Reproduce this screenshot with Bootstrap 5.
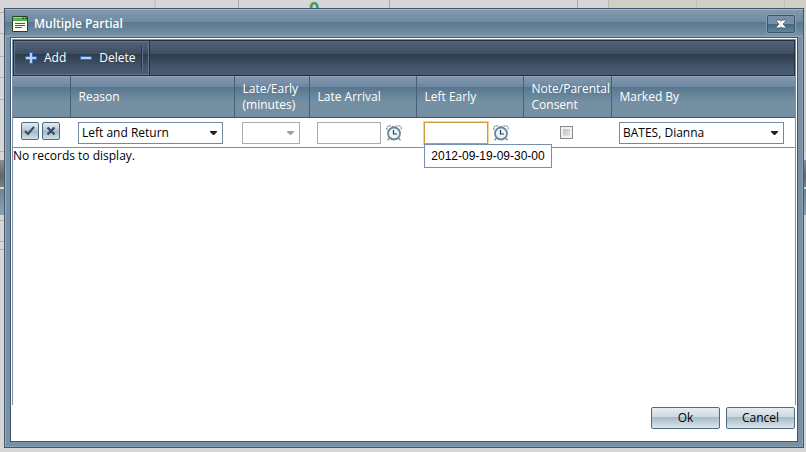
<!DOCTYPE html>
<html lang="en">
<head>
<meta charset="utf-8">
<meta name="viewport" content="width=device-width, initial-scale=1">
<title>Multiple Partial</title>
<link href="https://cdn.jsdelivr.net/npm/bootstrap@5.3.0/dist/css/bootstrap.min.css" rel="stylesheet">
<style>
body {
  font-family: "Open Sans", "Noto Sans", sans-serif;
  font-size: 12px;
  line-height: 16px;
  color: #000;
  background-color: #d6d6d6;
}
/* page behind the dialog */
.backdrop-page {
  background:
    linear-gradient(#8d9093, #63676b 15px, #7b7f83) 0 160px / 100% 27px no-repeat,
    linear-gradient(#6d8596, #8fa2b0) 0 189px / 100% 26px no-repeat,
    linear-gradient(#b0b0b0, #b0b0b0) 0 12px / 4px 1px no-repeat,
    linear-gradient(#b0b0b0, #b0b0b0) 0 33px / 4px 1px no-repeat,
    linear-gradient(#b0b0b0, #b0b0b0) 0 56px / 4px 1px no-repeat,
    linear-gradient(#b0b0b0, #b0b0b0) 0 77px / 4px 1px no-repeat,
    linear-gradient(#b0b0b0, #b0b0b0) 0 99px / 4px 1px no-repeat,
    linear-gradient(#b0b0b0, #b0b0b0) 0 151px / 4px 1px no-repeat,
    linear-gradient(#b0b0b0, #b0b0b0) 0 220px / 4px 1px no-repeat,
    linear-gradient(#b0b0b0, #b0b0b0) 0 241px / 4px 1px no-repeat,
    linear-gradient(#b0b0b0, #b0b0b0) 0 249px / 4px 1px no-repeat,
    linear-gradient(90deg, transparent 154px, #c6c6c6 154px 156px, transparent 156px 238px, #a9a9a9 238px 239px, transparent 239px 389px, #a9a9a9 389px 390px, transparent 390px 577px, #a9a9a9 577px 578px, transparent 578px 608px, #bbbbae 608px 609px, #cfcfc5 609px 696px, #c2c2b8 696px 697px, #cfcfc5 697px 784px, #c2c2b8 784px 785px, #cfcfc5 785px) 0 0 / 100% 152px no-repeat;
}
.behind-mark { left: 309px; top: 0; color: #4b9b57; font-weight: 700; font-size: 18px; line-height: 16px; }
.dialog-window {
  margin: 8px 2px 4px 4px;
  padding: 0 5px 5px;
  border: 1px solid #3f566b;
  background: #7890a5;
  box-shadow: inset 1px 1px 0 #9aadbd, inset -1px -1px 0 #8ca1b3;
  z-index: 1;
}
.title-row {
  height: 28px;
  margin: 0 -5px;
  padding: 2px 8px 0 7px;
  gap: 6px;
  color: #fff;
  background: linear-gradient(#a3b4c4 0 1px, #8398ae 1px, #6f8aa1 13px, #587890 13px, #748fa3 26px, #8da3b4 27px);
}
.title-row h1 { font-size: 12px; line-height: 16px; }
.close-btn {
  width: 28px; height: 18px;
  border: 1px solid #3a566b;
  border-radius: 2px;
  box-shadow: 0 0 0 1px #86a0b1;
  background: linear-gradient(#7790a5 0 50%, #426782 50%, #668499);
}
.client {
  border: 1px solid #3f566b;
  background: #fff;
  padding: 1px 1px 12px 1px;
}
.grid-panel { border: 1px solid #7890a8; border-bottom: 0; }
.command-bar {
  height: 36px;
  border: 1px solid #232f43;
  background: linear-gradient(#53647b, #3d4e62 13px, #2c3c4b 13px, #46566d 27px, #4b5b73);
}
.command-group {
  padding: 0 5px 0 10px;
  border: 1px solid #66768c;
  box-shadow: 1px 0 0 #232f43;
}
.command-btn { color: #fff; gap: 7px; line-height: 16px; }
.command-first { margin-right: 14px; }
.command-last { margin-right: 5px; }
.command-end { width: 2px; height: 24px; background: linear-gradient(90deg, #26354a 50%, #5e6e84 50%); }
.entry-grid { table-layout: fixed; line-height: 16px; }
.entry-grid th {
  height: 41px;
  padding: 1px 0 0 8px;
  color: #fff;
  font-weight: 400;
  white-space: nowrap;
  border-bottom: 1px solid #3f566b;
  border-right: 1px solid #45617a;
  background: linear-gradient(#92a6ba 0 1px, #8497ae 1px, #6c87a0 11px, #56768e 11px, #7590a3 26px);
}
.entry-grid th:last-child { border-right: 0; }
.entry-grid td { height: 30px; padding: 4px 0 3px 8px; border-bottom: 1px solid #7890a8; vertical-align: top; }
.entry-grid td.note-cell { padding-right: 9px; }
.col-act { width: 57px; } .col-reason { width: 164px; } .col-min { width: 75px; }
.col-time { width: 107px; } .col-note { width: 88px; }
.field {
  height: 22px;
  border: 1px solid #718aa3;
  border-radius: 0;
  background-color: #fff;
  padding: 0 3px;
  font-size: 12px;
  line-height: 20px;
  color: #000;
}
.pick {
  --arrow: url("data:image/svg+xml,%3Csvg xmlns='http://www.w3.org/2000/svg' width='7' height='4'%3E%3Cpath d='M0 0h7v1L4 4H3L0 1z' fill='%23222'/%3E%3C/svg%3E");
  appearance: none;
  background-image: var(--arrow);
  background-repeat: no-repeat;
  background-position: right 5px center;
  background-size: 7px 4px;
}
.field:disabled { border-color: #acacac; opacity: 1; }
.pick:disabled { --arrow: url("data:image/svg+xml,%3Csvg xmlns='http://www.w3.org/2000/svg' width='7' height='4'%3E%3Cpath d='M0 0h7v1L4 4H3L0 1z' fill='%23a0a0a0'/%3E%3C/svg%3E"); }
.pick-reason { width: 145px; } .pick-min { width: 58px; } .pick-by { width: 165px; }
.time-pair { gap: 5px; }
.time-box { width: 64px; border-color: #acacac; }
.time-active { border-color: #cf9c3c; box-shadow: 0 0 0 1px #f3d494; outline: 0; }
.row-tools { gap: 3px; }
.row-btn {
  width: 18px; height: 18px;
  border: 1px solid #4d6b85;
  border-radius: 2px;
  background: linear-gradient(#e6edf1, #b2c4d0 50%, #a1b7c6 50%, #d2dfe4);
}
.consent {
  appearance: none;
  width: 13px; height: 13px;
  border: 1px solid #8b8b8b;
  background: linear-gradient(135deg, #b4b4ba, #f1f1f1);
  box-shadow: inset 0 0 0 2px #f1f1f1;
}
.time-tip {
  left: 8px; top: 26px;
  z-index: 2;
  min-width: 128px;
  padding: 0 4px;
  border: 1px solid #7890b0;
  background: #fff;
  font: 12px/22px "Liberation Sans", Arial, sans-serif;
  text-align: center;
  white-space: nowrap;
}
.actions { gap: 6px; padding: 2px 1px 0 0; }
.action-btn {
  width: 69px; height: 22px;
  border: 1px solid #4d6b85;
  border-radius: 2px;
  color: #000;
  line-height: 20px;
  background: linear-gradient(#e8eef1, #cbd8df 45%, #a4b9c8 45%, #dce7e9);
}
</style>
<script src="https://cdn.jsdelivr.net/npm/bootstrap@5.3.0/dist/js/bootstrap.bundle.min.js"></script>
</head>
<body>
<div class="backdrop-page position-relative d-flex flex-column min-vh-100">
  <span class="behind-mark position-absolute">0</span>
  <section class="dialog-window position-relative d-flex flex-column flex-grow-1" role="dialog" aria-labelledby="dlg-title">
    <header class="title-row d-flex align-items-center">
      <svg width="16" height="16" viewBox="0 0 16 16" aria-hidden="true">
        <path d="M1 0h14l1 1v14l-1 1H1l-1-1V1z" fill="#26402a"/>
        <path d="M1 5h14v10H1z" fill="#fffff4"/>
        <path d="M1 1h14v4H1z" fill="#55b845"/><path d="M1 1h9v1H1z" fill="#9bdb83"/>
        <path d="M10 2h2v1h-2zM13 2h2v1h-2z" fill="#155b25"/>
        <path d="M3 7h10v1H3zM3 9h10v1H3zM3 11h7v1H3z" fill="#246b49"/>
      </svg>
      <h1 id="dlg-title" class="fw-semibold mb-0 flex-grow-1">Multiple Partial</h1>
      <button type="button" class="close-btn p-0 d-flex align-items-center justify-content-center" aria-label="Close">
        <svg width="10" height="10" viewBox="0 0 10 10" aria-hidden="true">
          <path d="M0 1h4l1 1 1-1h4v1L7 5l3 3v1H6L5 8 4 9H0V8l3-3-3-3z" fill="#f4f4f0" stroke="#30495c" stroke-width=".7"/>
        </svg>
      </button>
    </header>
    <main class="client d-flex flex-column flex-grow-1">
      <div class="grid-panel flex-grow-1">
        <div class="command-bar d-flex" role="toolbar" aria-label="Rows">
          <div class="command-group d-flex align-items-center">
            <button type="button" class="command-btn command-first border-0 bg-transparent p-0 d-flex align-items-center">
              <svg width="12" height="12" viewBox="0 0 12 12" aria-hidden="true"><path d="M4.500.5h3v4h4v3h-4v4h-3v-4h-4v-3h4z" fill="#b4d3f7" stroke="#3b69b6"/></svg>
              Add
            </button>
            <button type="button" class="command-btn command-last border-0 bg-transparent p-0 d-flex align-items-center">
              <svg width="12" height="12" viewBox="0 0 12 12" aria-hidden="true"><path d="M.5 4.500h11v3H.5z" fill="#b4d3f7" stroke="#3b69b6"/></svg>
              Delete
            </button>
            <span class="command-end"></span>
          </div>
        </div>
        <table class="entry-grid w-100">
          <colgroup><col class="col-act"><col class="col-reason"><col class="col-min"><col class="col-time"><col class="col-time"><col class="col-note"><col></colgroup>
          <thead>
            <tr>
              <th aria-label="Actions"></th>
              <th>Reason</th>
              <th>Late/Early<br>(minutes)</th>
              <th>Late Arrival</th>
              <th>Left Early</th>
              <th>Note/Parental<br>Consent</th>
              <th>Marked By</th>
            </tr>
          </thead>
          <tbody>
            <tr>
              <td>
                <div class="row-tools d-flex">
                  <button type="button" class="row-btn p-0 d-flex align-items-center justify-content-center" aria-label="Save row">
                    <svg width="12" height="10" viewBox="0 0 12 10" aria-hidden="true"><path d="M1 5l3 3 6-7" fill="none" stroke="#364e68" stroke-width="2.200"/></svg>
                  </button>
                  <button type="button" class="row-btn p-0 d-flex align-items-center justify-content-center" aria-label="Cancel row">
                    <svg width="10" height="10" viewBox="0 0 10 10" aria-hidden="true"><path d="M1.500 1.500l7 7M8.500 1.500l-7 7" stroke="#364e68" stroke-width="2.400"/></svg>
                  </button>
                </div>
              </td>
              <td><select class="field pick pick-reason d-block" aria-label="Reason"><option>Left and Return</option></select></td>
              <td><select class="field pick pick-min d-block" aria-label="Late/Early (minutes)" disabled><option></option></select></td>
              <td>
                <div class="time-pair d-flex align-items-center">
                  <input type="text" class="field time-box" aria-label="Late Arrival">
                  <button type="button" class="border-0 bg-transparent p-0 d-flex" aria-label="Pick late arrival time">
                    <svg width="16" height="16" viewBox="0 0 16 16" aria-hidden="true"><g id="alarm" fill="none"><path d="M.8 5V2.500L2.500.8h3M10.500.8h3l1.700 1.700V5M6 1.500h4" stroke="#7f97a9" stroke-width="1.200" stroke-dasharray="2 .6"/><path d="M3.500 13l-2 2.300M12.500 13l2 2.300" stroke="#7f97a9" stroke-width="1.500"/><circle cx="8" cy="8.500" r="6" fill="#edf4f8" stroke="#6c8799" stroke-width="1.800"/><path d="M7.500 5v4H11" stroke="#263c54" stroke-width="1.200"/></g></svg>
                  </button>
                </div>
              </td>
              <td class="position-relative">
                <div class="time-pair d-flex align-items-center">
                  <input type="text" class="field time-box time-active" aria-label="Left Early" aria-describedby="left-tip">
                  <button type="button" class="border-0 bg-transparent p-0 d-flex" aria-label="Pick left early time">
                    <svg width="16" height="16" viewBox="0 0 16 16" aria-hidden="true"><use href="#alarm"/></svg>
                  </button>
                </div>
                <div id="left-tip" class="time-tip position-absolute" role="tooltip">2012-09-19-09-30-00</div>
              </td>
              <td class="note-cell"><div class="d-flex justify-content-center pt-1"><input type="checkbox" class="consent m-0" aria-label="Note/Parental Consent"></div></td>
              <td><select class="field pick pick-by d-block" aria-label="Marked By"><option>BATES, Dianna</option></select></td>
            </tr>
          </tbody>
        </table>
        <p class="mb-0">No records to display.</p>
      </div>
      <footer class="actions d-flex justify-content-end">
        <button type="button" class="action-btn p-0">Ok</button>
        <button type="button" class="action-btn p-0">Cancel</button>
      </footer>
    </main>
  </section>
</div>
</body>
</html>
